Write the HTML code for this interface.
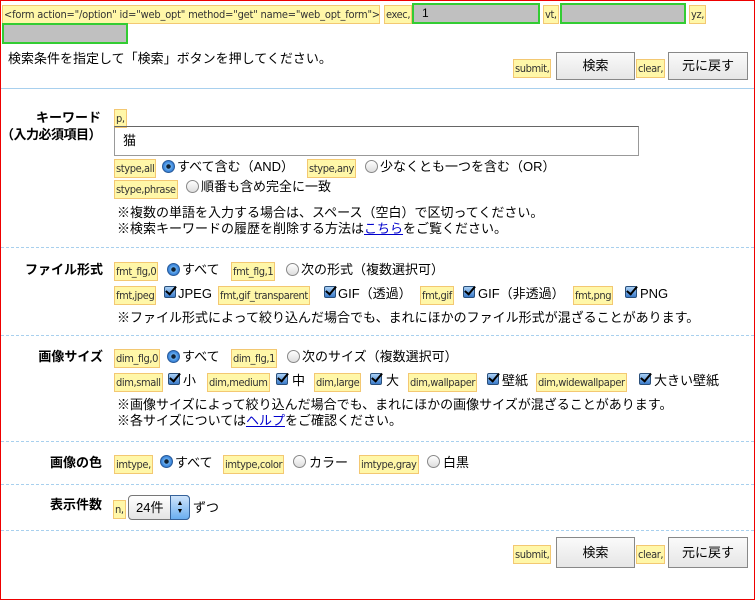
<!DOCTYPE html>
<html><head><meta charset="utf-8"><style>
*{margin:0;padding:0;box-sizing:border-box}
body{width:755px;height:588px;overflow:hidden;background:#fff;font-family:"Liberation Sans","Noto Sans CJK JP",sans-serif;font-size:13px;color:#000;position:relative}
#frame{position:absolute;left:0;top:0;width:755px;height:600px;border:1px solid #e00}
.lb{position:absolute;background:#fff7a8;border:1px solid #f3c872;font-size:11px;line-height:17px;height:19px;padding:0 1px;color:#333;white-space:nowrap;font-family:"DejaVu Sans Condensed","Liberation Sans Narrow","Liberation Sans",sans-serif;letter-spacing:-0.4px}
.t{position:absolute;white-space:nowrap;font-size:13px;line-height:16px}
.b{font-weight:bold;text-align:right}
.gi{position:absolute;background:#c0c0c0;border:2px solid #3c3;height:21px;font-size:12px;line-height:17px;padding-left:8px}
.btn{position:absolute;background:linear-gradient(#fafafa,#e6e6e6);border:1px solid #888;font-size:13px;text-align:center;line-height:26px}
.r{position:absolute;width:13px;height:13px;border-radius:50%;border:1px solid #888;background:linear-gradient(#fff,#ddd)}
.r.on{background:radial-gradient(circle,#123 0 2px,#6ab0f0 2.5px,#2a74d0 6px);border-color:#2a5c9a}
.cb{position:absolute;width:12px;height:12px;border:1px solid #2a4f7a;border-radius:2px;background:linear-gradient(#a9d0f5,#3b7ccb)}
.cb:after{content:"";position:absolute;left:3px;top:-3px;width:4px;height:9px;border:solid #000;border-width:0 2px 2px 0;transform:rotate(40deg)}
.dl{position:absolute;left:1px;width:753px;border-top:1px dashed #a8d0ee}
a{color:#00c}
</style></head><body>
<div id="frame"></div>
<div class="lb" style="left:2px;top:5px;width:378px;font-size:11px;letter-spacing:-0.2px">&lt;form action="/option" id="web_opt" method="get" name="web_opt_form"&gt;</div>
<div class="lb" style="left:384px;top:5px">exec,</div>
<div class="gi" style="left:412px;top:3px;width:128px">1</div>
<div class="lb" style="left:543px;top:5px">vt,</div>
<div class="gi" style="left:560px;top:3px;width:126px"></div>
<div class="lb" style="left:689px;top:5px">yz,</div>
<div class="gi" style="left:2px;top:23px;width:126px"></div>
<div class="t" style="left:8px;top:51px">検索条件を指定して「検索」ボタンを押してください。</div>
<div class="lb" style="left:513px;top:59px">submit,</div>
<div class="btn" style="left:556px;top:52px;width:79px;height:28px">検索</div>
<div class="lb" style="left:636px;top:59px">clear,</div>
<div class="btn" style="left:668px;top:52px;width:80px;height:28px">元に戻す</div>
<div style="position:absolute;left:1px;top:88px;width:753px;border-top:1px solid #a8d0ee"></div>

<div class="t b" style="left:0;width:101px;top:110px">キーワード</div>
<div class="t b" style="left:0;width:101px;top:127px;letter-spacing:-0.5px">（入力必須項目）</div>
<div class="lb" style="left:114px;top:109px">p,</div>
<div style="position:absolute;left:114px;top:126px;width:525px;height:30px;border:1px solid #999;border-top-color:#666;padding-left:8px;line-height:28px;font-size:13px">猫</div>
<div class="lb" style="left:114px;top:159px">stype,all</div>
<div class="r on" style="left:162px;top:160px"></div>
<div class="t" style="left:177px;top:159px">すべて含む（AND）</div>
<div class="lb" style="left:307px;top:159px">stype,any</div>
<div class="r" style="left:365px;top:160px"></div>
<div class="t" style="left:380px;top:159px">少なくとも一つを含む（OR）</div>
<div class="lb" style="left:114px;top:180px">stype,phrase</div>
<div class="r" style="left:186px;top:180px"></div>
<div class="t" style="left:201px;top:179px">順番も含め完全に一致</div>
<div class="t" style="left:117px;top:205px">※複数の単語を入力する場合は、スペース（空白）で区切ってください。</div>
<div class="t" style="left:117px;top:221px">※検索キーワードの履歴を削除する方法は<a href="#">こちら</a>をご覧ください。</div>
<div class="dl" style="top:247px"></div>

<div class="t b" style="left:0;width:103px;top:262px">ファイル形式</div>
<div class="lb" style="left:114px;top:262px">fmt_flg,0</div>
<div class="r on" style="left:167px;top:263px"></div>
<div class="t" style="left:182px;top:262px">すべて</div>
<div class="lb" style="left:231px;top:262px">fmt_flg,1</div>
<div class="r" style="left:286px;top:263px"></div>
<div class="t" style="left:301px;top:262px">次の形式（複数選択可）</div>
<div class="lb" style="left:114px;top:286px">fmt,jpeg</div>
<div class="cb" style="left:164px;top:286px"></div>
<div class="t" style="left:178px;top:286px">JPEG</div>
<div class="lb" style="left:218px;top:286px">fmt,gif_transparent</div>
<div class="cb" style="left:324px;top:286px"></div>
<div class="t" style="left:338px;top:286px">GIF（透過）</div>
<div class="lb" style="left:420px;top:286px">fmt,gif</div>
<div class="cb" style="left:463px;top:286px"></div>
<div class="t" style="left:478px;top:286px">GIF（非透過）</div>
<div class="lb" style="left:573px;top:286px">fmt,png</div>
<div class="cb" style="left:625px;top:286px"></div>
<div class="t" style="left:640px;top:286px">PNG</div>
<div class="t" style="left:117px;top:310px">※ファイル形式によって絞り込んだ場合でも、まれにほかのファイル形式が混ざることがあります。</div>
<div class="dl" style="top:335px"></div>

<div class="t b" style="left:0;width:103px;top:349px">画像サイズ</div>
<div class="lb" style="left:114px;top:349px">dim_flg,0</div>
<div class="r on" style="left:167px;top:350px"></div>
<div class="t" style="left:182px;top:349px">すべて</div>
<div class="lb" style="left:231px;top:349px">dim_flg,1</div>
<div class="r" style="left:287px;top:350px"></div>
<div class="t" style="left:302px;top:349px">次のサイズ（複数選択可）</div>
<div class="lb" style="left:114px;top:373px">dim,small</div>
<div class="cb" style="left:168px;top:373px"></div>
<div class="t" style="left:183px;top:373px">小</div>
<div class="lb" style="left:207px;top:373px">dim,medium</div>
<div class="cb" style="left:276px;top:373px"></div>
<div class="t" style="left:292px;top:373px">中</div>
<div class="lb" style="left:314px;top:373px">dim,large</div>
<div class="cb" style="left:370px;top:373px"></div>
<div class="t" style="left:386px;top:373px">大</div>
<div class="lb" style="left:408px;top:373px">dim,wallpaper</div>
<div class="cb" style="left:487px;top:373px"></div>
<div class="t" style="left:502px;top:373px">壁紙</div>
<div class="lb" style="left:536px;top:373px">dim,widewallpaper</div>
<div class="cb" style="left:639px;top:373px"></div>
<div class="t" style="left:654px;top:373px">大きい壁紙</div>
<div class="t" style="left:117px;top:397px">※画像サイズによって絞り込んだ場合でも、まれにほかの画像サイズが混ざることがあります。</div>
<div class="t" style="left:117px;top:413px">※各サイズについては<a href="#">ヘルプ</a>をご確認ください。</div>
<div class="dl" style="top:441px"></div>

<div class="t b" style="left:0;width:102px;top:455px">画像の色</div>
<div class="lb" style="left:114px;top:455px">imtype,</div>
<div class="r on" style="left:160px;top:455px"></div>
<div class="t" style="left:175px;top:455px">すべて</div>
<div class="lb" style="left:223px;top:455px">imtype,color</div>
<div class="r" style="left:293px;top:455px"></div>
<div class="t" style="left:309px;top:455px">カラー</div>
<div class="lb" style="left:359px;top:455px">imtype,gray</div>
<div class="r" style="left:427px;top:455px"></div>
<div class="t" style="left:443px;top:455px">白黒</div>
<div class="dl" style="top:484px"></div>

<div class="t b" style="left:0;width:102px;top:497px">表示件数</div>
<div class="lb" style="left:113px;top:500px">n,</div>
<div style="position:absolute;left:128px;top:495px;width:62px;height:25px;border:1px solid #777;border-radius:4px;background:linear-gradient(#fff,#e4e4e4);font-size:13px;line-height:23px;padding-left:7px">24件</div>
<div style="position:absolute;left:170px;top:495px;width:20px;height:25px;border:1px solid #35629a;border-radius:0 4px 4px 0;background:linear-gradient(#cfe4fb,#6aaef0);font-size:7px;line-height:8px;text-align:center;padding-top:4px">▲<br>▼</div>
<div class="t" style="left:193px;top:500px">ずつ</div>
<div class="dl" style="top:530px"></div>

<div class="lb" style="left:513px;top:545px">submit,</div>
<div class="btn" style="left:556px;top:537px;width:79px;height:31px;line-height:29px">検索</div>
<div class="lb" style="left:636px;top:545px">clear,</div>
<div class="btn" style="left:668px;top:537px;width:80px;height:31px;line-height:29px">元に戻す</div>
</body></html>
